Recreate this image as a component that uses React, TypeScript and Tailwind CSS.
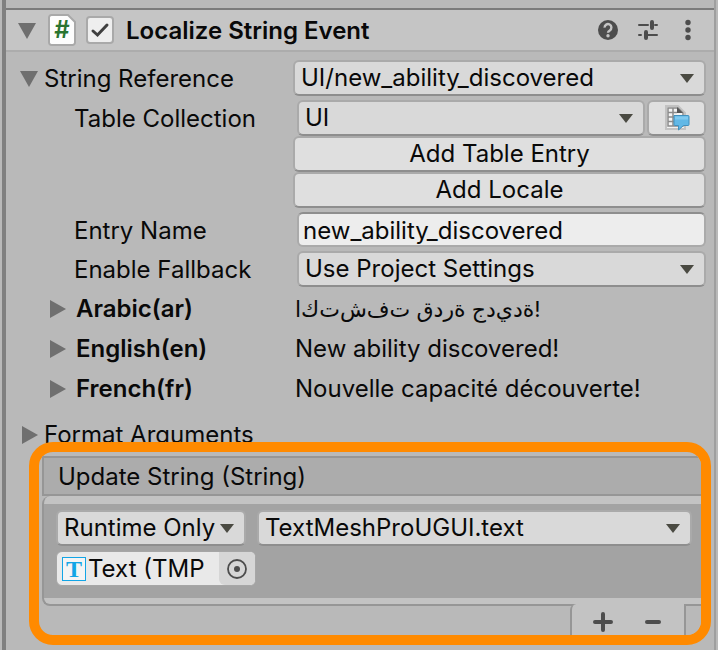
import React, { useState } from 'react';

// ── Small drawings ───────────────────────────────────────────────────────────
function Foldout({ open = false, label }: { open?: boolean; label: string }) {
  const [expanded, setExpanded] = useState(open);
  return (
    <button
      type="button"
      aria-label={label}
      aria-expanded={expanded}
      onClick={() => setExpanded(!expanded)}
      className="flex h-5 w-5 shrink-0 items-center justify-center text-[#6f6f6f]"
    >
      <svg width="20" height="20" viewBox="0 0 20 20" fill="currentColor" aria-hidden="true">
        {expanded ? <path d="M1 3h18l-9 16z" /> : <path d="M2 1v18l16-9z" />}
      </svg>
    </button>
  );
}

function ScriptIcon() {
  return (
    <span className="relative flex h-8 w-7 items-center justify-center">
      <svg className="absolute inset-0" width="28" height="32" viewBox="0 0 28 32" aria-hidden="true">
        <path
          d="M3.500 1H20l7 7v20.500a2.500 2.500 0 0 1-2.500 2.500h-21A2.500 2.500 0 0 1 1 28.500v-25A2.500 2.500 0 0 1 3.500 1z"
          fill="#fdfdfd"
          stroke="#a9a9a9"
          strokeWidth="2"
        />
      </svg>
      <span className="relative text-2xl leading-8 font-semibold text-[#2a7530]">#</span>
    </span>
  );
}

function HelpIcon() {
  return (
    <svg width="20" height="20" viewBox="0 0 20 20" aria-hidden="true">
      <circle cx="10" cy="10" r="10" fill="#4d4d4d" />
      <path d="M6.600 7.600a3.400 3.400 0 1 1 5.200 2.800c-1.200.8-1.800 1.200-1.800 2.300" fill="none" stroke="#c5c5c5" strokeWidth="2.400" />
      <circle cx="10" cy="15.800" r="1.700" fill="#c5c5c5" />
    </svg>
  );
}

function PresetIcon() {
  return (
    <svg width="20" height="20" viewBox="0 0 20 20" fill="none" stroke="#4d4d4d" strokeLinecap="round" aria-hidden="true">
      <path d="M1 5h9M17 5h2M1 15h2M10 15h9" strokeWidth="2" />
      <path d="M14 2v6M8 12v6" strokeWidth="4" />
    </svg>
  );
}

function MenuIcon() {
  return (
    <svg width="6" height="22" viewBox="0 0 6 22" fill="#4d4d4d" aria-hidden="true">
      <circle cx="3" cy="3.500" r="2.700" />
      <circle cx="3" cy="11" r="2.700" />
      <circle cx="3" cy="18.500" r="2.700" />
    </svg>
  );
}

function TableIcon() {
  return (
    <svg width="26" height="28" viewBox="0 0 26 28" aria-hidden="true">
      <path d="M2 2h12l7 7v16H2z" fill="#f1f1f1" stroke="#c2c2c2" strokeWidth="2" />
      <path d="M4 4h10l5 5v13H4z" fill="#f4f4f4" stroke="#8b8b8b" strokeWidth="1.500" />
      <path d="M4 8.500h9M4 13h15M4 17.500h15M9 4v18" stroke="#8b8b8b" strokeWidth="1.500" />
      <path d="M13 3v6h6z" fill="#555" />
      <path d="M10 11.500h14q1 0 1 1v8q0 1-1 1h-4.500L14.500 26v-4.500H11q-1 0-1-1v-8z" fill="#62b8e6" stroke="#4290bd" />
      <path d="M11 12.500h13v3H11z" fill="#7fcaf0" />
    </svg>
  );
}

// ── Controls ─────────────────────────────────────────────────────────────────
const frame = 'border-2 border-[#aaaaaa] border-b-[#8e8e8e] rounded-md';

function Dropdown({ id, value, label, className = '' }: {
  id: string; value: string; label?: string; className?: string;
}) {
  return (
    <div className={`relative ${className}`}>
      <select
        id={id}
        aria-label={label}
        defaultValue={value}
        className={`${frame} block h-9 w-full appearance-none bg-[#d9d9d9] pr-6 pl-1.5 leading-8`}
      >
        <option>{value}</option>
      </select>
      <svg
        className="pointer-events-none absolute top-[14px] right-3"
        width="14" height="9" viewBox="0 0 14 9" fill="#4a4a42" aria-hidden="true"
      >
        <path d="M0 0h14L7 9z" />
      </svg>
    </div>
  );
}

function Field({ label, htmlFor, children }: {
  label?: string; htmlFor?: string; children: React.ReactNode;
}) {
  return (
    <div className="grid grid-cols-[287px_minmax(0,1fr)] items-center">
      {label ? <label htmlFor={htmlFor} className="pt-0.5 pl-[68px]">{label}</label> : <span />}
      {children}
    </div>
  );
}

const locales = [
  { name: 'Arabic(ar)', text: 'اكتشفت قدرة جديدة!', arabic: true },
  { name: 'English(en)', text: 'New ability discovered!' },
  { name: 'French(fr)', text: 'Nouvelle capacité découverte!' },
];

// ── Event list ───────────────────────────────────────────────────────────────
function UpdateStringEvent() {
  return (
    <section className="relative mr-[3px] ml-[23px] overflow-hidden rounded-3xl border-[10px] border-[#ff8a00] pt-1 pl-[3px]">
      <h3 className="h-10 border-y-2 border-l-2 border-[#969696] bg-[#acacac] pt-px pl-[14px] leading-9">
        Update String (String)
      </h3>
      <div className="rounded-l-lg border-b-2 border-l-2 border-[#969696] bg-[#c3c3c3] pt-2 pb-[6px]">
        <div className="bg-[#a3a3a3] pt-[6px] pr-[9px] pb-3 pl-3">
          <div className="flex gap-[11px]">
            <Dropdown id="call-state" label="Call state" value="Runtime Only" className="w-[190px] shrink-0" />
            <Dropdown id="target" label="Target property" value="TextMeshProUGUI.text" className="min-w-0 flex-1" />
          </div>
          <div className="mt-[5px] flex h-[35px] w-[200px] overflow-hidden rounded-md border border-[#a6a6a6] bg-[#e9e9e9]">
            <span className="flex min-w-0 flex-1 items-center gap-[2px] pl-[5px]">
              <span className="flex h-6 w-6 shrink-0 items-center justify-center border border-[#12a5e6] bg-[#f4f4f4] font-['Liberation_Serif',serif] text-2xl leading-6 font-bold text-[#12a5e6]">
                T
              </span>
              <span className="whitespace-nowrap">Text (TMP</span>
            </span>
            <button type="button" aria-label="Select object" className="flex w-9 items-center justify-center rounded-bl-md bg-[#d6d6d6]">
              <svg width="20" height="20" viewBox="0 0 20 20" aria-hidden="true">
                <circle cx="10" cy="10" r="9" fill="none" stroke="#4d4d4d" strokeWidth="1.800" />
                <circle cx="10" cy="10" r="3" fill="#4d4d4d" />
              </svg>
            </button>
          </div>
        </div>
      </div>
      <div className="-mt-0.5 flex h-[31px] justify-end">
        <div className="flex w-[114px] rounded-tl-md border-l-2 border-[#969696] bg-[#c3c3c3]">
          <button type="button" aria-label="Add" className="flex flex-1 items-center justify-center pt-1 pl-1.5">
            <svg width="20" height="20" viewBox="0 0 20 20" stroke="#4d4d4d" strokeWidth="4" strokeLinecap="round" aria-hidden="true">
              <path d="M2 10h16M10 2v16" />
            </svg>
          </button>
          <button type="button" aria-label="Remove" className="flex flex-1 items-center justify-center pt-1 pr-1.5">
            <svg width="20" height="20" viewBox="0 0 20 20" stroke="#4d4d4d" strokeWidth="4" strokeLinecap="round" aria-hidden="true">
              <path d="M4 10h12" />
            </svg>
          </button>
        </div>
        <div className="w-[17px] border-t-2 border-l-2 border-[#969696] bg-[#b9b9b9]" />
      </div>
    </section>
  );
}

// ── Inspector ────────────────────────────────────────────────────────────────
export default function App() {
  const [enabled, setEnabled] = useState(true);

  return (
    <div className="flex min-h-screen bg-[#b9b9b9] px-[2px] font-['Inter','DejaVu_Sans',sans-serif] text-2xl leading-8 text-[#090909]">
      <main className="min-w-0 flex-1 border-r-2 border-l-4 border-r-[#9f9f9f] border-l-[#808080] pt-2 pb-[5px]">
        <header className="flex h-11 items-center border-t-2 border-b-2 border-t-[#7b7b7b] border-b-[#acacac] bg-[#c5c5c5] pr-[23px] pl-[11px]">
          <Foldout open label="Localize String Event" />
          <span className="ml-[11px]"><ScriptIcon /></span>
          <span className="relative ml-[10px] h-7 w-7">
            <input
              id="enabled"
              type="checkbox"
              checked={enabled}
              onChange={() => setEnabled(!enabled)}
              className="block h-7 w-7 appearance-none rounded border-2 border-[#a9a9a9] bg-[#eeeeee]"
            />
            {enabled && (
              <svg className="pointer-events-none absolute inset-0" width="28" height="28" viewBox="0 0 28 28" aria-hidden="true">
                <path d="M7 15l4.500 4L21 9" fill="none" stroke="#3f3f3f" strokeWidth="3" strokeLinecap="round" />
              </svg>
            )}
          </span>
          <label htmlFor="enabled" className="ml-3 flex-1 pt-0.5 font-semibold">Localize String Event</label>
          <div className="flex items-center gap-5">
            <button type="button" aria-label="Help"><HelpIcon /></button>
            <button type="button" aria-label="Presets"><PresetIcon /></button>
            <button type="button" aria-label="More options" className="ml-[7px]"><MenuIcon /></button>
          </div>
        </header>

        <div className="pt-2 pr-2">
          <div className="grid grid-cols-[287px_minmax(0,1fr)] items-center">
            <div className="flex items-center gap-[5px] pl-[13px]">
              <Foldout open label="String Reference" />
              <label htmlFor="string-reference" className="pt-0.5">String Reference</label>
            </div>
            <Dropdown id="string-reference" value="UI/new_ability_discovered" />
          </div>

          <div className="mt-1">
            <Field label="Table Collection" htmlFor="table-collection">
              <div className="ml-1 flex gap-0.5">
                <Dropdown id="table-collection" value="UI" className="min-w-0 flex-1" />
                <button type="button" aria-label="Open table" className={`${frame} flex h-9 w-[59px] items-center justify-center bg-[#dfdfdf]`}>
                  <TableIcon />
                </button>
              </div>
            </Field>
            <Field>
              <button type="button" className={`${frame} h-9 bg-[#dfdfdf] leading-8`}>Add Table Entry</button>
            </Field>
            <Field>
              <button type="button" className={`${frame} h-9 bg-[#dfdfdf] leading-8`}>Add Locale</button>
            </Field>
          </div>

          <div className="mt-1 space-y-1">
            <Field label="Entry Name" htmlFor="entry-name">
              <input
                id="entry-name"
                defaultValue="new_ability_discovered"
                className="ml-1 h-[35px] min-w-0 rounded-md border-2 border-[#aaaaaa] border-t-[#8e8e8e] bg-[#ededed] pt-0.5 pl-1"
              />
            </Field>
            <Field label="Enable Fallback" htmlFor="fallback">
              <Dropdown id="fallback" value="Use Project Settings" className="ml-1" />
            </Field>
          </div>

          <ul className="mt-[2px]">
            {locales.map(locale => (
              <li key={locale.name} className="grid h-10 grid-cols-[289px_minmax(0,1fr)] items-center">
                <div className="flex items-center gap-2 pl-[42px] font-semibold">
                  <Foldout label={locale.name} />
                  {locale.name}
                </div>
                {locale.arabic ? (
                  <bdo dir="ltr" lang="ar" className="text-[22px] leading-8 [font-feature-settings:'init'_0,'medi'_0,'fina'_0]">{locale.text}</bdo>
                ) : (
                  <span>{locale.text}</span>
                )}
              </li>
            ))}
          </ul>
        </div>

        <div className="mt-[6px] -mb-[13px] flex h-10 items-center gap-1 pl-[14px]">
          <Foldout label="Format Arguments" />
          Format Arguments
        </div>
        <UpdateStringEvent />
      </main>
    </div>
  );
}
